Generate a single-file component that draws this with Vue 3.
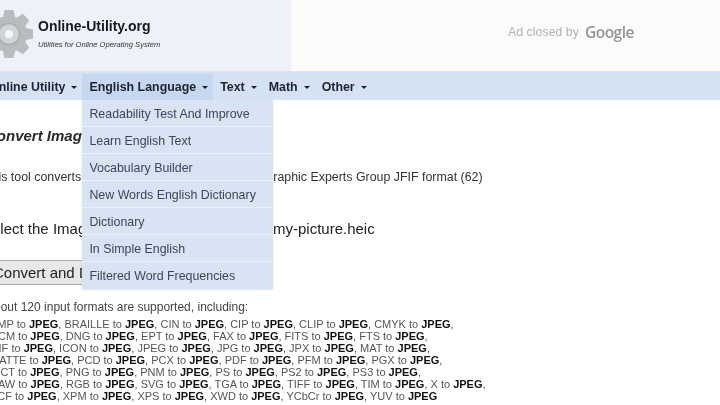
<script setup>
const menu = ['Readability Test And Improve','Learn English Text','Vocabulary Builder','New Words English Dictionary','Dictionary','In Simple English','Filtered Word Frequencies']
const lines = [
 ['BMP','BRAILLE','CIN','CIP','CLIP','CMYK'],
 ['DCM','DNG','EPT','FAX','FITS','FTS'],
 ['GIF','ICON','JPEG','JPG','JPX','MAT'],
 ['MATTE','PCD','PCX','PDF','PFM','PGX'],
 ['PICT','PNG','PNM','PS','PS2','PS3'],
 ['RAW','RGB','SVG','TGA','TIFF','TIM','X'],
 ['XCF','XPM','XPS','XWD','YCbCr','YUV']
]
const teeth = [0,45,90,135,180,225,270,315]
</script>

<template>
  <div class="page">
    <header class="top">
      <div class="brand">
        <svg class="gear" width="50" height="50" viewBox="-25 -25 50 50">
          <g fill="#b7bcbf">
            <path v-for="t in teeth" :key="t" d="M-6.5 -15 L-4.5 -24 H4.5 L6.5 -15 Z" :transform="`rotate(${t})`" />
          </g>
          <circle r="18" fill="#b7bcbf" />
          <circle r="10.5" fill="#d0d4d6" stroke="#a9aeb1" stroke-width="1.5" />
          <circle r="4" fill="#f4f5f7" />
        </svg>
        <div class="brand-text">
          <div class="site">Online-Utility.org</div>
          <div class="tag">Utilities for Online Operating System</div>
        </div>
      </div>
      <div class="ad"><span>Ad closed by</span><b>Google</b></div>
    </header>

    <nav class="nav">
      <div class="nav-item">Online Utility<i></i></div>
      <div class="nav-item active">English Language<i></i>
        <ul class="drop">
          <li v-for="m in menu" :key="m">{{ m }}</li>
        </ul>
      </div>
      <div class="nav-item">Text<i></i></div>
      <div class="nav-item">Math<i></i></div>
      <div class="nav-item">Other<i></i></div>
    </nav>

    <main class="content">
      <h1>Convert Image</h1>
      <p class="intro">This tool converts many image files into Joint Photographic Experts Group JFIF format (62)</p>
      <div class="pick"><span class="pick-label">Select the Image</span><span>my-picture.heic</span></div>
      <button class="go">Convert and Download</button>
      <p class="about">About 120 input formats are supported, including:</p>
      <div class="formats">
        <div v-for="(l, i) in lines" :key="i"><template v-for="(f, j) in l" :key="f">{{ f }} to <b>JPEG</b>{{ j < l.length - 1 || i < lines.length - 1 ? ', ' : '' }}</template></div>
      </div>
    </main>
  </div>
</template>

<style>
html, body { margin: 0; background: #fff; overflow: hidden; }
</style>

<style scoped>
.page { width: 720px; height: 405px; overflow: hidden; font-family: "Liberation Sans", Arial, sans-serif; color: #222; position: relative; filter: blur(.35px); }
.top { height: 72px; display: flex; background: #fbfbfb; border-bottom: 1px solid #dfe4ee; box-sizing: border-box; }
.brand { width: 291px; background: #eef1f9; display: flex; align-items: center; gap: 4px; box-sizing: border-box; }
.gear { margin-left: -16px; flex: none; margin-top: -4px; }
.brand-text { margin-top: -4px; }
.site { font-size: 14px; font-weight: 700; color: #15181c; line-height: 18px; }
.tag { font-size: 7.6px; font-style: italic; color: #333; line-height: 10px; margin-top: 5px; }
.ad { flex: 1; display: flex; align-items: center; gap: 6px; padding-left: 217px; margin-top: -8px; }
.ad span { font-size: 12.4px; color: #b2b2b2; }
.ad b { font: 600 15.5px "Open Sans", sans-serif; color: #969696; letter-spacing: -.5px; }
.nav { height: 28px; background: #d5e2f4; display: flex; align-items: stretch; margin-left: -18px; padding-top: 2px; box-sizing: border-box; font-size: 12.4px; font-weight: 700; color: #1c2230; }
.nav-item { padding: 0 5px 1px 7px; display: flex; align-items: center; position: relative; white-space: nowrap; }
.nav-item i { width: 0; height: 0; margin-left: 6px; border: 3px solid transparent; border-top-color: #222; border-bottom: 0; margin-top: 2px; }
.nav-item.active { background: #c6d7f0; }
.drop { position: absolute; top: 26px; left: 0; width: 191px; margin: 0; padding: 0; list-style: none; background: #d8e3f3; font-weight: 400; color: #3c4657; box-shadow: 0 1px 2px rgba(120,140,170,.25); z-index: 2; }
.drop li { height: 27px; line-height: 26px; padding: 1px 0 0 7px; box-sizing: border-box; border-bottom: 1px solid #eaf0f9; font-size: 12.4px; }
.drop li:last-child { border-bottom: 0; }
.content { margin-left: -14px; }
h1 { margin: 27px 0 0; font-size: 15px; line-height: 18px; font-weight: 700; font-style: italic; color: #2a2a2a; }
.intro { margin: 24px 0 0 -2px; font-size: 12.4px; line-height: 16px; color: #333; white-space: nowrap; }
.pick { margin: 35px 0 0 -4px; display: flex; font-size: 15px; line-height: 18px; color: #222; }
.pick-label { width: 291px; }
.go { display: block; margin: 22px 0 0 0; width: 190px; height: 25px; padding: 0 6px; font: 15px "Liberation Sans", sans-serif; color: #222; background: #e8e8e8; border: 1px solid #aaa; border-radius: 3px; text-align: left; }
.about { margin: 15px 0 0; font-size: 12px; line-height: 14px; color: #444; }
.formats { margin: 4px 0 0 4px; font-size: 11px; line-height: 12px; color: #555; white-space: nowrap; }
.formats b { color: #111; }
</style>
